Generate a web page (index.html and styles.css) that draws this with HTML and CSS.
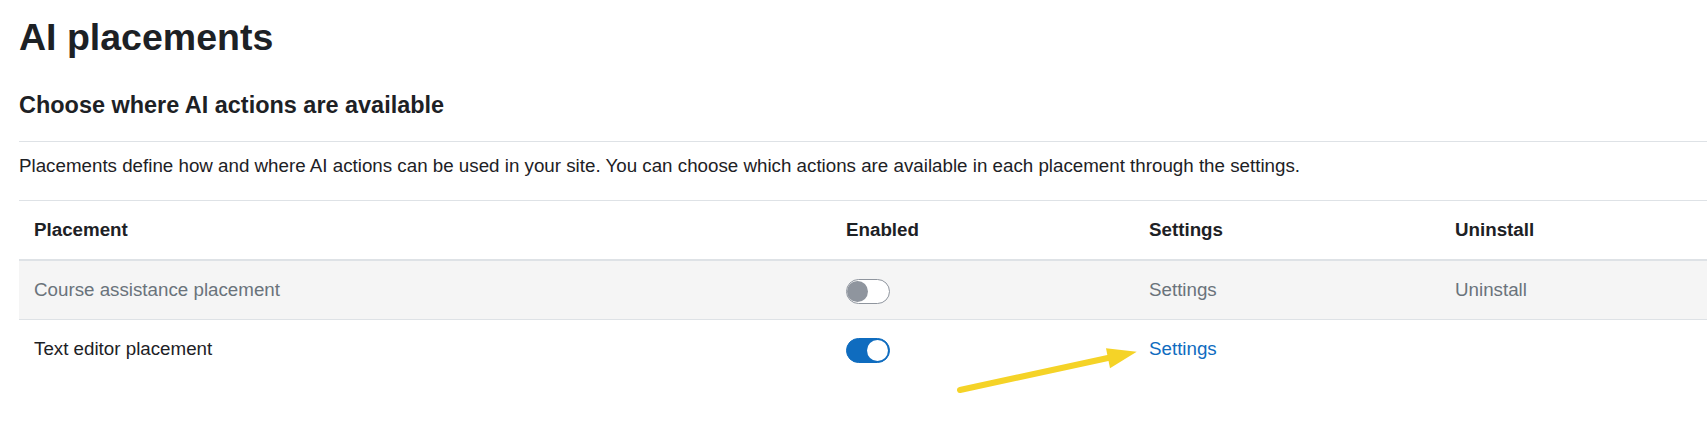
FILE: index.html
```html
<!DOCTYPE html>
<html lang="en">
<head>
<meta charset="utf-8">
<title>AI placements</title>
<link rel="stylesheet" href="styles.css">
</head>
<body>
<main class="page">
  <h2 class="title">AI placements</h2>
  <h3 class="subtitle">Choose where AI actions are available</h3>
  <div class="desc">
    <p>Placements define how and where AI actions can be used in your site. You can choose which actions are available in each placement through the settings.</p>
  </div>
  <div class="table-wrap">
    <table class="placements">
      <colgroup>
        <col class="c-name">
        <col class="c-enabled">
        <col class="c-settings">
        <col class="c-uninstall">
      </colgroup>
      <thead>
        <tr>
          <th>Placement</th>
          <th>Enabled</th>
          <th>Settings</th>
          <th>Uninstall</th>
        </tr>
      </thead>
      <tbody>
        <tr class="dimmed">
          <td>Course assistance placement</td>
          <td><span class="switch off" role="switch" aria-checked="false"></span></td>
          <td><a class="link muted" href="#">Settings</a></td>
          <td><a class="link muted" href="#">Uninstall</a></td>
        </tr>
        <tr>
          <td>Text editor placement</td>
          <td><span class="switch on" role="switch" aria-checked="true"></span></td>
          <td><a class="link" href="#">Settings</a></td>
          <td></td>
        </tr>
      </tbody>
    </table>
    <svg class="arrow" width="200" height="60" viewBox="0 0 200 60" aria-hidden="true">
      <line x1="20" y1="48" x2="169" y2="15.7" stroke="#f5d327" stroke-width="6" stroke-linecap="round"/>
      <polygon points="196.7,9.7 166,6.3 170,26.3" fill="#f5d327"/>
    </svg>
  </div>
</main>
</body>
</html>
```

FILE: styles.css
```css
html, body {
  margin: 0;
  padding: 0;
  background: #fff;
}

html {
  overflow: hidden;
}

body {
  font-family: "Liberation Sans", Arial, sans-serif;
  font-size: 18.75px;
  line-height: 1.5;
  color: #1d2125;
}

.page {
  padding: 0 0 60px 19px;
}

.title {
  margin: 14.5px 0 0;
  font-size: 37.5px;
  font-weight: 700;
  line-height: 1.2;
}

.subtitle {
  margin: 31px 0 0;
  font-size: 23.44px;
  font-weight: 700;
  line-height: 1.2;
}

.desc {
  margin-top: 22.4px;
  border-top: 1px solid #dee2e6;
  padding-top: 10px;
}

.desc p {
  margin: 0;
}

.table-wrap {
  position: relative;
  margin-top: 19.7px;
}

.placements {
  width: 100%;
  border-collapse: collapse;
  table-layout: fixed;
}

.c-name { width: 812px; }
.c-enabled { width: 303px; }
.c-settings { width: 306px; }

.placements th,
.placements td {
  text-align: left;
  padding: 15px;
  vertical-align: middle;
  border-top: 1px solid #dee2e6;
  white-space: nowrap;
}

.placements th {
  font-weight: 700;
  border-bottom: 2px solid #dee2e6;
}

.placements thead + tbody tr:first-child td {
  border-top: 0;
}

.dimmed td {
  background: #f5f5f5;
  color: #6a737b;
}

.link {
  color: #0f6cbf;
  text-decoration: none;
}

.link.muted {
  color: #6a737b;
}

.switch {
  display: inline-block;
  position: relative;
  box-sizing: border-box;
  width: 44px;
  height: 25px;
  border-radius: 13px;
  vertical-align: middle;
}

.switch::before {
  content: "";
  position: absolute;
  top: 1px;
  width: 21px;
  height: 21px;
  border-radius: 50%;
}

.switch.off {
  background: #fff;
  border: 1px solid #8f959e;
}

.switch.off::before {
  left: 0;
  background: #8f959e;
}

.switch.on {
  background: #0f6cbf;
  border: 1px solid #0f6cbf;
}

.switch.on::before {
  right: 1px;
  background: #fff;
}

.arrow {
  position: absolute;
  left: 921px;
  top: 142px;
  overflow: visible;
}
```
